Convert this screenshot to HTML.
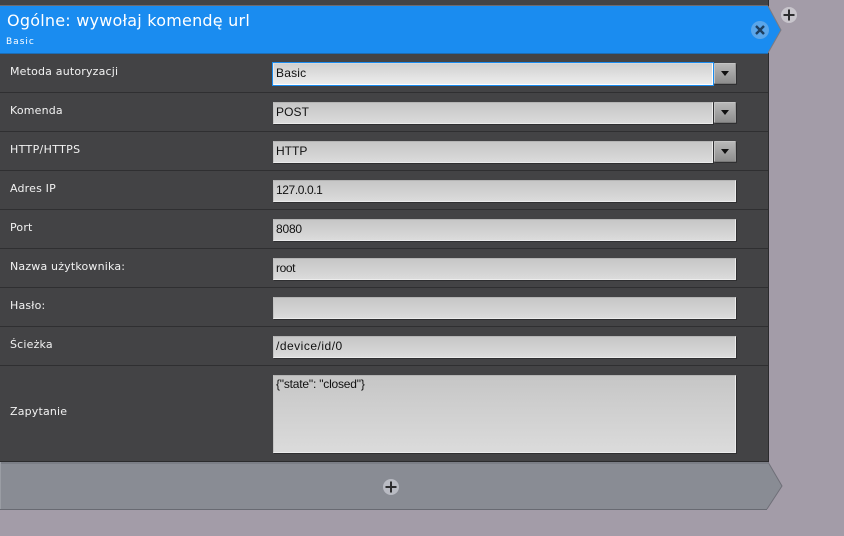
<!DOCTYPE html>
<html lang="pl">
<head>
<meta charset="utf-8">
<title>Ogólne: wywołaj komendę url</title>
<style>
html,body{margin:0;padding:0}
body{width:844px;height:536px;overflow:hidden;background:#a39ca8;position:relative}
.a{position:absolute}
.panel{left:0;top:0;width:768px;height:461px;background:#434345;border-right:1px solid #2b2b2d}
.line{left:0;width:768px;height:1px;background:#2f2f31}
.lbl{left:10px;font:11px/14px "DejaVu Sans",sans-serif;color:#f2f2f2;white-space:nowrap;letter-spacing:.18px}
.inp{left:273px;width:463px;height:22px;box-sizing:border-box;background:linear-gradient(#c6c6c6,#dbdbdb);border:1px solid #ececec;border-top-color:#b4b4b4;border-left-color:#c4c4c4;box-shadow:1px 1px 0 #2f2f31;font:12px/19px "Liberation Sans",sans-serif;color:#111;padding-left:2px;white-space:nowrap}
.sel{width:440px}
.foc{left:272px;top:62px;width:442px;height:24px;padding-left:3px;line-height:21px;border:1px solid #1a8cf0;box-shadow:none;background:linear-gradient(#cfcfcf,#eee)}
.foc:before{content:"";position:absolute;left:0;top:0;right:0;bottom:0;border:1px solid #fff;border-top-color:#d8d8d8;border-left-color:#e8e8e8}
.foc span{position:relative}
.btn{left:714px;width:22px;height:21px;box-sizing:border-box;background:linear-gradient(#b8b8b8,#8e8e8e);border:1px solid #c4c4c4;border-right-color:#9a9a9a;border-bottom-color:#787878;border-radius:1px;box-shadow:1px 1px 0 #2f2f31}
.btn:after{content:"";position:absolute;left:6px;top:7px;border-top:5px solid #111;border-left:4.5px solid transparent;border-right:4.5px solid transparent;border-bottom:0}
svg{display:block}
</style>
</head>
<body>
<div class="a panel"></div>

<svg class="a" style="left:0;top:0" width="844" height="536">
  <rect x="0" y="5" width="768" height="1" fill="#6e6b70"/>
  <path d="M0 6H768L781 30L768 53H0Z" fill="#1a8cf0"/>
  <path d="M768 6L781 30L768 53" fill="none" stroke="#7d7a80" stroke-width="1"/>
  <rect x="0" y="53" width="768" height="1" fill="#1c6db5"/>
  <path d="M0 462H768L782 486L767 509H0Z" fill="#898c94"/>
  <path d="M768 462L782 486L767 509" fill="none" stroke="#6f6f78" stroke-width="1"/>
  <rect x="0" y="461" width="769" height="1" fill="#2b2b2d"/>
  <rect x="0" y="462" width="768" height="2" fill="#7b7e86"/>
  <rect x="0" y="509" width="767" height="1" fill="#686a72"/>
  <rect x="0" y="462" width="1" height="47" fill="#9a9da4"/>
  <!-- close -->
  <circle cx="760" cy="30" r="9" fill="#5aa6ea"/>
  <path d="M756 26L764 34M764 26L756 34" stroke="#1d3f60" stroke-width="2.4"/>
  <!-- top plus -->
  <circle cx="789" cy="15" r="8" fill="#c8c5cc"/>
  <path d="M783.5 15H794.5M789 9.5V20.5" stroke="#2c2c2e" stroke-width="2"/>
  <!-- bottom plus -->
  <circle cx="391" cy="487" r="8" fill="#b9bbc3"/>
  <path d="M385.5 487H396.5M391 481.5V492.5" stroke="#2c2c2e" stroke-width="2"/>
</svg>

<div class="a" style="left:7px;top:11px;font:16px/19px 'DejaVu Sans',sans-serif;color:#fff;white-space:nowrap;letter-spacing:.22px">Ogólne: wywołaj komendę url</div>
<div class="a" style="left:6px;top:36px;font:9px/12px 'DejaVu Sans',sans-serif;color:#fff;letter-spacing:1px">Basic</div>

<div class="a line" style="top:92px"></div>
<div class="a line" style="top:131px"></div>
<div class="a line" style="top:170px"></div>
<div class="a line" style="top:209px"></div>
<div class="a line" style="top:248px"></div>
<div class="a line" style="top:287px"></div>
<div class="a line" style="top:326px"></div>
<div class="a line" style="top:365px"></div>

<div class="a lbl" style="top:65px">Metoda autoryzacji</div>
<div class="a lbl" style="top:104px">Komenda</div>
<div class="a lbl" style="top:143px;letter-spacing:.35px">HTTP/HTTPS</div>
<div class="a lbl" style="top:182px">Adres IP</div>
<div class="a lbl" style="top:221px">Port</div>
<div class="a lbl" style="top:260px">Nazwa użytkownika:</div>
<div class="a lbl" style="top:299px">Hasło:</div>
<div class="a lbl" style="top:338px">Ścieżka</div>
<div class="a lbl" style="top:405px">Zapytanie</div>

<div class="a inp sel foc"><span style="letter-spacing:.2px">Basic</span></div>
<div class="a btn" style="top:63px"></div>
<div class="a inp sel" style="top:102px"><span style="letter-spacing:.1px">POST</span></div>
<div class="a btn" style="top:102px"></div>
<div class="a inp sel" style="top:141px">HTTP</div>
<div class="a btn" style="top:141px"></div>
<div class="a inp" style="top:180px"><span style="letter-spacing:-.4px">127.0.0.1</span></div>
<div class="a inp" style="top:219px"><span style="letter-spacing:-.2px">8080</span></div>
<div class="a inp" style="top:258px"><span style="letter-spacing:-.4px">root</span></div>
<div class="a inp" style="top:297px"></div>
<div class="a inp" style="top:336px"><span style="letter-spacing:.5px">/device/id/0</span></div>
<div class="a inp" style="top:375px;height:78px;line-height:17px"><span style="letter-spacing:-.2px">{"state": "closed"}</span></div>
</body>
</html>
